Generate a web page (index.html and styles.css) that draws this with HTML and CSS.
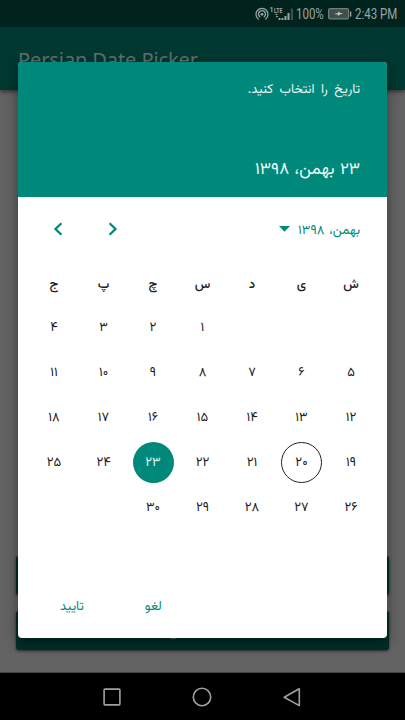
FILE: index.html
```html
<!DOCTYPE html>
<html lang="fa">
<head>
<meta charset="utf-8">
<title>Persian Date Picker</title>
<link rel="stylesheet" href="styles.css">
</head>
<body>
<div class="screen">
  <header class="status">
    <svg class="hotspot" viewBox="0 0 14 14"><g fill="none" stroke="currentColor" stroke-width="1.3" stroke-linecap="round"><path d="M3.2 12A6 6 0 1 1 10.8 12M4.8 9.8A3.5 3.5 0 1 1 9.2 9.8"/></g><circle cx="7" cy="7.3" r="1.4" fill="currentColor"/></svg>
    <svg class="signal" viewBox="0 0 26 15"><text x="0.500" y="6" class="tiny">1</text><text x="5" y="6.500" class="tiny" textLength="8.500" lengthAdjust="spacingAndGlyphs">LTE</text><g fill="currentColor"><path d="M6 9l1.500-1.500L9 9zM6.500 10h3L8 11.500zM9.500 12h2v2h-2zM12.500 12h2v2h-2zM15.500 10h2v4h-2zM18.500 7h2v7h-2z"/><path opacity=".35" d="M21.800 2.500h2.200v11.500h-2.200z"/></g></svg>
    <span class="percent"><span class="narrow">100%</span></span>
    <svg class="battery" viewBox="0 0 24 12"><rect x=".6" y=".6" width="20" height="10.300" rx="1.500" fill="#3d504c" stroke="#71807d" stroke-width="1.2"/><path d="M22 3.500h1.300v5H22z" fill="#9ba6a4"/><path d="M6 6l4-1 .5-1.500 2 1.500 3 .8-4 .8-.8 1.500-1.200-1.500z" fill="#c0c8c6"/></svg>
    <span class="clock"><span class="narrow">2:43 PM</span></span>
  </header>
  <div class="toolbar">Persian Date Picker</div>
  <main class="content">
    <div class="button"></div>
    <div class="button" dir="rtl">انتخاب تاریخ</div>
  </main>
  <nav class="navbar">
    <svg viewBox="0 0 20 20"><rect x="2.100" y="2.100" width="15.800" height="15.800" rx=".8"/></svg>
    <svg viewBox="0 0 20 20"><circle cx="10" cy="10" r="8.700"/></svg>
    <svg viewBox="0 0 20 20"><path d="M17.300 1.800v16.800L2.200 10.200z"/></svg>
  </nav>

  <section class="dialog" dir="rtl">
    <div class="head">
      <div class="prompt">تاریخ را انتخاب کنید.</div>
      <div class="chosen">۲۳ بهمن، ۱۳۹۸</div>
    </div>
    <div class="month-bar">
      <span class="month">بهمن، ۱۳۹۸</span>
      <svg class="caret" viewBox="0 0 11 6"><path d="M0 0h11L5.500 5.800z" fill="currentColor"/></svg>
      <div class="arrows">
        <svg viewBox="0 0 10 14"><path d="M1.600 1.200L7.500 7l-5.900 5.800"/></svg>
        <svg viewBox="0 0 10 14"><path d="M8.400 1.200L2.500 7l5.900 5.800"/></svg>
      </div>
    </div>
    <div class="week"><span>ش</span><span>ی</span><span>د</span><span>س</span><span>چ</span><span>پ</span><span>ج</span></div>
    <div class="days">
      <span></span><span></span><span></span><span>۱</span><span>۲</span><span>۳</span><span>۴</span>
      <span>۵</span><span>۶</span><span>۷</span><span>۸</span><span>۹</span><span>۱۰</span><span>۱۱</span>
      <span>۱۲</span><span>۱۳</span><span>۱۴</span><span>۱۵</span><span>۱۶</span><span>۱۷</span><span>۱۸</span>
      <span>۱۹</span><span class="today">۲۰</span><span>۲۱</span><span>۲۲</span><span class="selected">۲۳</span><span>۲۴</span><span>۲۵</span>
      <span>۲۶</span><span>۲۷</span><span>۲۸</span><span>۲۹</span><span>۳۰</span><span></span><span></span>
    </div>
    <div class="actions"><span class="cancel">لغو</span><span class="confirm">تایید</span></div>
  </section>
</div>
</body>
</html>
```
FILE: styles.css
```css
* { box-sizing: border-box; }
body { margin: 0; font-family: "Vazirmatn", "Noto Sans Arabic", "Noto Naskh Arabic UI", "DejaVu Sans", sans-serif; }
.screen { position: relative; width: 405px; height: 720px; overflow: hidden; display: flex; flex-direction: column; background: #636363; }
.status { flex: none; height: 27px; background: #00231e; color: #9ba6a4; display: flex; align-items: center; justify-content: flex-end; padding-right: 8px; font: 14px/27px Roboto, sans-serif; }
.hotspot { width: 14px; height: 14px; }
.signal { width: 26px; height: 15px; margin-right: 1px; }
.tiny { font: bold 7px Roboto, sans-serif; fill: currentColor; }
.percent, .clock { white-space: nowrap; padding-top: 1px; }
.percent { width: 28px; }
.clock { width: 42px; }
.narrow { display: inline-block; transform: scaleX(.82); transform-origin: left; }
.battery { width: 24px; height: 12px; margin: 0 3px 0 4px; }
.toolbar { flex: none; height: 63px; background: #003831; color: #636e6b; padding: 18px 18px; font: 20px/30px "Noto Sans", sans-serif; letter-spacing: -.1px; box-shadow: 0 2px 4px rgba(0,0,0,.45); z-index: 1; white-space: nowrap; }
.content { flex: 1; display: flex; flex-direction: column; justify-content: flex-end; gap: 16px; padding: 0 16px 22px; border-bottom: 1px solid #444; }
.button { height: 39px; background: #002f29; border-radius: 3px; box-shadow: 0 1px 3px rgba(0,0,0,.6); color: #53605e; font-size: 13px; line-height: 43px; text-align: center; word-spacing: 4px; }
.navbar { flex: none; height: 47px; background: #000; display: flex; justify-content: center; align-items: center; gap: 70px; padding-right: 1px; }
.navbar svg { width: 20px; height: 20px; fill: none; stroke: #a0a0a0; stroke-width: 1.6; stroke-linejoin: round; }
.dialog { position: absolute; z-index: 2; left: 18px; top: 62px; width: 369px; height: 576px; border-radius: 4px; background: #fff; overflow: hidden; box-shadow: 0 5px 14px rgba(0,0,0,.42); color: #202020; }
.head { height: 135px; background: #00897b; color: #eaf6f4; padding: 18px 27px 0; display: flex; flex-direction: column; gap: 55px; }
.prompt { font-size: 13px; line-height: 20px; word-spacing: 3px; }
.chosen { font-size: 17px; line-height: 30px; color: #f2f9f8; word-spacing: .7px; }
.month-bar { height: 64px; padding: 0 27px 0 35px; display: flex; align-items: center; color: #00897b; }
.month { font-size: 13px; line-height: 24px; padding-top: 3px; word-spacing: 1.500px; }
.caret { width: 11px; height: 6px; margin-right: 8px; }
.arrows { margin-right: auto; display: flex; gap: 45px; }
.arrows svg { width: 10px; height: 14px; fill: none; stroke: currentColor; stroke-width: 2.300; }
.week, .days { display: grid; grid-template-columns: repeat(7, 49.5px); justify-content: center; justify-items: center; }
.week { height: 44px; padding-top: 3px; align-items: center; font-size: 13px; font-weight: 500; }
.days { grid-auto-rows: 45px; align-items: center; font-size: 13px; margin-bottom: 41px; }
.days span { width: 41px; height: 41px; line-height: 43px; text-align: center; border-radius: 50%; }
.days .today { border: 1px solid #222; line-height: 41px; }
.days .selected { background: #00897b; color: #e4f3f1; }
.actions { display: flex; direction: ltr; flex-direction: row-reverse; justify-content: flex-end; gap: 61px; padding-left: 42px; color: #00897b; font-size: 13px; line-height: 73px; }
```
